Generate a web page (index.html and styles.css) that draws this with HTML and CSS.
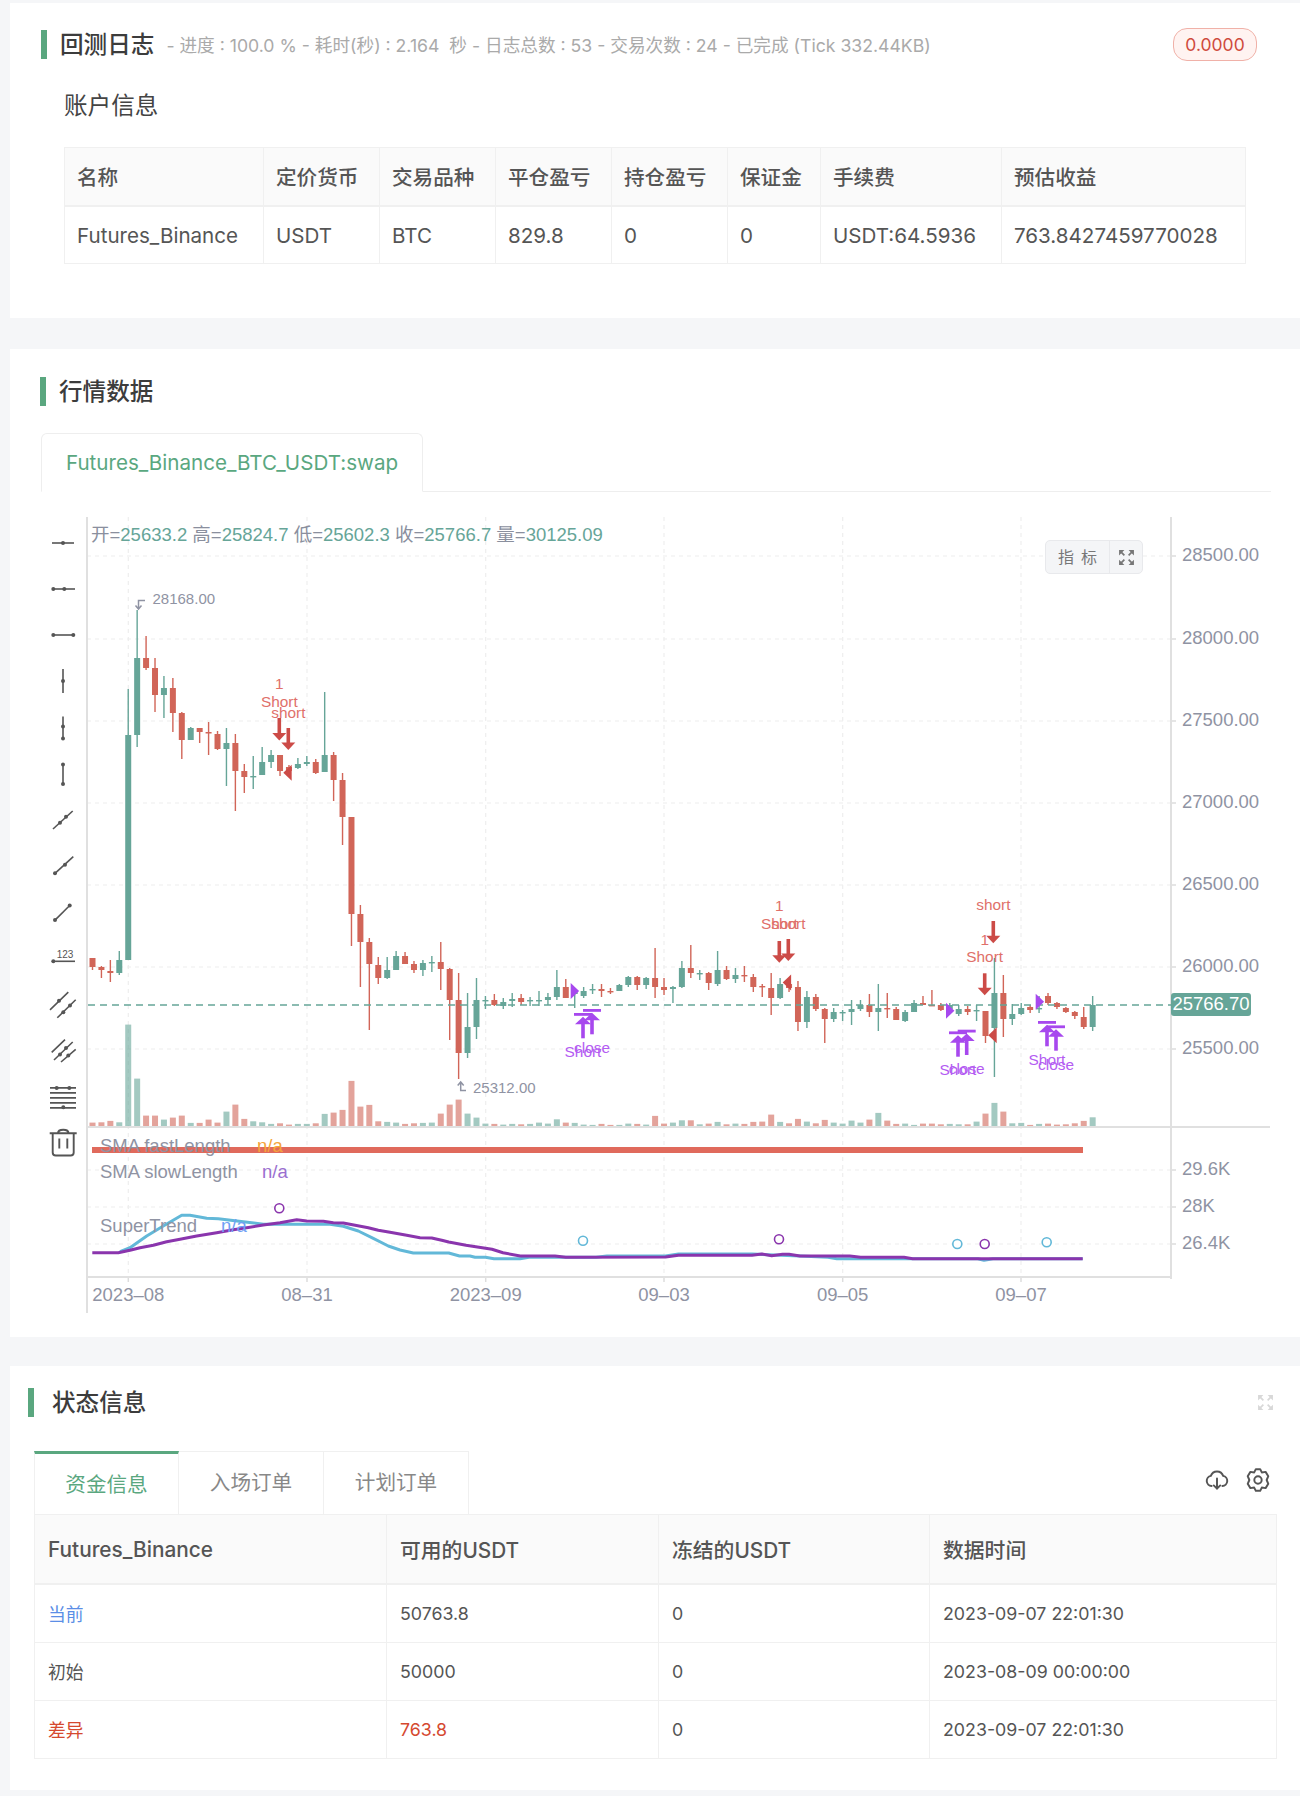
FILE: index.html
```html
<!DOCTYPE html>
<html lang="zh">
<head>
    <meta charset="UTF-8">
    <meta name="viewport" content="width=device-width, initial-scale=1.0">
    <title>回测日志</title>
    <link rel="stylesheet" href="styles.css">
</head>
<body>

    <section class="card log-card">
        <div class="card-head">
            <h2 class="card-title">回测日志</h2>
            <span class="progress">- 进度 : 100.0 % - 耗时(秒) : 2.164 &nbsp;秒 - 日志总数 : 53 - 交易次数 : 24 - 已完成 (Tick 332.44KB)</span>
            <span class="badge">0.0000</span>
        </div>
        <h3 class="sub-title">账户信息</h3>
        <table class="data-table account-table">
            <colgroup>
                <col width="199"><col width="116"><col width="116"><col width="116"><col width="116"><col width="93"><col width="181"><col width="244">
            </colgroup>
            <thead>
                <tr><th>名称</th><th>定价货币</th><th>交易品种</th><th>平仓盈亏</th><th>持仓盈亏</th><th>保证金</th><th>手续费</th><th>预估收益</th></tr>
            </thead>
            <tbody>
                <tr><td>Futures_Binance</td><td>USDT</td><td>BTC</td><td>829.8</td><td>0</td><td>0</td><td>USDT:64.5936</td><td>763.8427459770028</td></tr>
            </tbody>
        </table>
    </section>

    <section class="card market-card">
        <div class="card-head market-head">
            <h2 class="card-title">行情数据</h2>
        </div>
        <div class="symbol-tabs">
            <div class="symbol-tab">Futures_Binance_BTC_USDT:swap</div>
        </div>
        <div class="chart-wrap">
            <div class="toolbar">
                <svg class="tool" viewBox="0 0 28 28"><path d="M3 14H25"/><circle cx="14" cy="14" r="2"/></svg>
                <svg class="tool" viewBox="0 0 28 28"><path d="M3 14H26"/><circle cx="4.3" cy="14" r="2"/><circle cx="15.3" cy="14" r="2"/></svg>
                <svg class="tool" viewBox="0 0 28 28"><path d="M4 14H24"/><circle cx="4.3" cy="14" r="2"/><circle cx="24.3" cy="14" r="2"/></svg>
                <svg class="tool" viewBox="0 0 28 28"><path d="M14 2V26"/><circle cx="14" cy="14" r="2"/></svg>
                <svg class="tool" viewBox="0 0 28 28"><path d="M14 2.5V24"/><circle cx="14" cy="12.4" r="2"/><circle cx="14" cy="24.4" r="2"/></svg>
                <svg class="tool" viewBox="0 0 28 28"><path d="M14 4.5V24"/><circle cx="14" cy="4.5" r="2"/><circle cx="14" cy="23.9" r="2"/></svg>
                <svg class="tool" viewBox="0 0 28 28"><path d="M4 23L23.7 5"/><circle cx="11" cy="16.8" r="2"/><circle cx="17" cy="10.8" r="2"/></svg>
                <svg class="tool" viewBox="0 0 28 28"><path d="M6 21.3L24.3 4.7"/><circle cx="6" cy="21.3" r="2"/><circle cx="16" cy="12.7" r="2"/></svg>
                <svg class="tool" viewBox="0 0 28 28"><path d="M6 22.1L20.7 7.5"/><circle cx="6" cy="22.1" r="2"/><circle cx="20.7" cy="7.5" r="2"/></svg>
                <svg class="tool" viewBox="0 0 28 28"><path d="M4.3 17.3H26"/><circle cx="4.3" cy="17.3" r="2"/><text class="tool-num" x="16" y="14" text-anchor="middle">123</text></svg>
                <svg class="tool" viewBox="0 0 28 28"><path d="M1 19.8L19.3 2.2M8.3 27.8L26.7 9.8"/><circle cx="10" cy="10.8" r="2"/><circle cx="14.3" cy="22.2" r="2"/><circle cx="21" cy="15.5" r="2"/></svg>
                <svg class="tool" viewBox="0 0 28 28"><path d="M2.7 15.3L16 2.6M5 23L23.7 5M12 25L26.7 12.3"/><circle cx="17" cy="11" r="2"/><circle cx="11" cy="17.6" r="2"/><circle cx="19.3" cy="18.6" r="2"/></svg>
                <svg class="tool" viewBox="0 0 28 28"><path d="M1 4.9H27M1 9.9H27M1 14.9H27M1 19.9H27M1 24.9H27"/><circle cx="7.7" cy="4.9" r="2"/><circle cx="20.3" cy="4.9" r="2"/><circle cx="14.3" cy="24.2" r="2"/></svg>
                <svg class="tool trash" viewBox="0 0 28 28"><path d="M.7 4.2H27.7M9 4.2C9 -.5 19.5 -.5 19.5 4.2M3.7 5V23.5Q3.7 26.5 6.7 26.5H21.7Q24.7 26.5 24.7 23.5V5M10.3 9.5V19.5M18.3 9.5V19.5"/></svg>
            </div>
            <svg id="chart" class="chart" viewBox="87 516 1213 800" width="1213" height="800"></svg>
            <div class="indicator">
                <span class="indicator-text">指标</span>
                <span class="indicator-full">
                    <svg class="expand" viewBox="0 0 16 16"><path d="M1 1H6L1 6ZM15 1H10L15 6ZM1 15H6L1 10ZM15 15H10L15 10Z"/><path class="expand-tail" d="M3 3L6 6M13 3L10 6M3 13L6 10M13 13L10 10"/></svg>
                </span>
            </div>
        </div>
    </section>

    <section class="card status-card">
        <div class="card-head status-head">
            <h2 class="card-title">状态信息</h2>
            <svg class="expand expand-light" viewBox="0 0 16 16"><path d="M1 1H6L1 6ZM15 1H10L15 6ZM1 15H6L1 10ZM15 15H10L15 10Z"/><path class="expand-tail" d="M3 3L6 6M13 3L10 6M3 13L6 10M13 13L10 10"/></svg>
        </div>
        <div class="status-tabs">
            <div class="tab-list">
                <div class="tab active">资金信息</div>
                <div class="tab">入场订单</div>
                <div class="tab">计划订单</div>
            </div>
            <div class="tab-tools">
                <svg class="tab-icon cloud" viewBox="0 0 24 24"><path d="M7 17.5A4.7 4.7 0 0 1 6.3 8.2A6 6 0 0 1 17.7 8.2A4.7 4.7 0 0 1 17 17.5"/><path d="M12 10.5V20M9 17L12 20L15 17"/></svg>
                <svg class="tab-icon gear" viewBox="0 0 24 24"><path d="M10 2H14L15.5 5L19 4.5L21.5 8.5L20 12L21.5 15.5L19 19.5L15.5 19L14 22H10L8.5 19L5 19.5L2.5 15.5L4 12L2.5 8.5L5 4.5L8.5 5Z"/><circle cx="12" cy="12" r="3.4"/></svg>
            </div>
        </div>
        <table class="data-table status-table">
            <colgroup>
                <col width="352"><col width="272"><col width="271"><col width="347">
            </colgroup>
            <thead>
                <tr><th>Futures_Binance</th><th>可用的USDT</th><th>冻结的USDT</th><th>数据时间</th></tr>
            </thead>
            <tbody>
                <tr><td class="blue">当前</td><td>50763.8</td><td>0</td><td>2023-09-07 22:01:30</td></tr>
                <tr><td>初始</td><td>50000</td><td>0</td><td>2023-08-09 00:00:00</td></tr>
                <tr><td class="red">差异</td><td class="red">763.8</td><td>0</td><td>2023-09-07 22:01:30</td></tr>
            </tbody>
        </table>
    </section>

    <script src="chart.js"></script>
</body>
</html>
```

FILE: styles.css
```css
* {
    box-sizing: border-box;
}
body {
    margin: 0;
    background-color: #f5f6f8;
    font-family: Inter, "Noto Sans CJK SC", sans-serif;
    color: #555;
}
h2, h3 {
    margin: 0;
    font-weight: 500;
}

.card {
    margin-left: 10px;
    background-color: white;
}
.log-card {
    margin-top: 3px;
    height: 315px;
    padding: 25px 43px 0 31px;
}
.market-card {
    margin-top: 31px;
    height: 988px;
    padding-top: 28px;
}
.status-card {
    margin-top: 29px;
    height: 424px;
    padding-top: 22px;
}

.card-head {
    display: flex;
    align-items: center;
}
.market-head {
    margin-left: 30px;
}
.card-title {
    border-left: 6px solid #5aa77f;
    padding-left: 13px;
    height: 29px;
    line-height: 29px;
    font-size: 23.6px;
    color: #3c3c3c;
    white-space: nowrap;
}
.progress {
    margin-left: 12px;
    font-size: 17.65px;
    color: #aaa;
    white-space: nowrap;
}
.badge {
    margin-left: auto;
    height: 33px;
    width: 84px;
    line-height: 31px;
    text-align: center;
    font-size: 17.5px;
    color: #cf4a3c;
    background-color: #fff3f1;
    border: 1px solid #f0b1a8;
    border-radius: 14px;
}
.sub-title {
    margin: 30px 0 0 23px;
    font-size: 23.6px;
    line-height: 30px;
    font-weight: 400;
    color: #444;
}

.data-table {
    border-collapse: collapse;
    table-layout: fixed;
    color: #555;
}
.data-table th,
.data-table td {
    border: 1px solid #f0f0f0;
    text-align: left;
    white-space: nowrap;
}
.data-table th {
    background-color: #fafafa;
    border-bottom-width: 2px;
    font-weight: 500;
}
.account-table {
    margin: 26px 0 0 23px;
    width: 1181px;
}
.account-table th,
.account-table td {
    height: 58px;
    padding: 0 12px;
    font-size: 20.6px;
}
.account-table td {
    padding-top: 1px;
}
.status-table {
    margin-left: 24px;
    width: 1242px;
}
.status-table th {
    height: 69.5px;
    padding: 0 13px;
    font-size: 20.8px;
}
.status-table td {
    height: 58px;
    padding: 0 13px;
    font-size: 17.8px;
}
.blue {
    color: #5b8ee6;
}
.red {
    color: #d5492f;
}

.symbol-tabs {
    margin: 27px 29px 0 31px;
    height: 59px;
    border-bottom: 1px solid #eee;
}
.symbol-tab {
    width: 382px;
    height: 59px;
    line-height: 58px;
    text-align: center;
    font-size: 20.6px;
    color: #5aa77f;
    background-color: white;
    border: 1px solid #eee;
    border-bottom-color: white;
    border-radius: 6px 6px 0 0;
}

.chart-wrap {
    position: relative;
    display: flex;
    margin-top: 25px;
}
.toolbar {
    display: flex;
    flex-direction: column;
    gap: 18.15px;
    width: 77px;
    padding: 12px 0 0 39px;
}
.tool {
    flex: none;
    width: 28px;
    height: 28px;
    overflow: visible;
}
.tool path {
    fill: none;
    stroke: #555;
    stroke-width: 1.6;
}
.tool circle {
    fill: #555;
}
.tool-num {
    font-family: "Liberation Sans", sans-serif;
    font-size: 10px;
    fill: #555;
}
.trash path {
    stroke-width: 1.9;
}
.chart {
    flex: none;
    display: block;
    overflow: visible;
}
.indicator {
    position: absolute;
    top: 23px;
    right: 157px;
    display: flex;
    width: 98px;
    height: 34px;
    background-color: #f4f5f7;
    border: 1px solid #e8e9ec;
    border-radius: 5px;
}
.indicator-text {
    width: 63px;
    line-height: 32px;
    text-align: center;
    font-size: 16px;
    letter-spacing: 7px;
    padding-left: 7px;
    color: #777;
}
.indicator-full {
    flex: 1;
    display: flex;
    align-items: center;
    justify-content: center;
    border-left: 1px solid #e8e9ec;
}
.expand {
    width: 17px;
    height: 17px;
}
.expand path {
    fill: #777;
}
.expand .expand-tail {
    fill: none;
    stroke: #777;
    stroke-width: 1.6;
}
.expand-light path {
    fill: #d8d8d8;
}
.expand-light .expand-tail {
    stroke: #d8d8d8;
}

.chart text {
    font-family: "Liberation Sans", "Noto Sans CJK SC", sans-serif;
    font-size: 18.5px;
    dominant-baseline: central;
    transform: translateY(-2px);
}
.chart .axis-label {
    fill: #8f93a3;
}
.chart .price-tag {
    fill: white;
    text-anchor: middle;
}
.chart .ohlc-name {
    fill: #8a8f9e;
}
.chart .ohlc-value {
    fill: #66a598;
}
.chart .extreme {
    font-size: 15px;
    fill: #8f93a3;
}
.chart .mark-red,
.chart .mark-purple {
    font-size: 15.4px;
    text-anchor: middle;
}
.chart .mark-red {
    fill: #e0706a;
}
.chart .mark-purple {
    fill: #b45cf2;
}
.chart .na-orange {
    fill: #f5a53a;
}
.chart .na-purple {
    fill: #9a6fd0;
}
.chart .na-blue {
    fill: #6f9ff5;
}
.chart .grid {
    stroke: #eee;
    stroke-width: 1.2;
    stroke-dasharray: 4 4;
}
.chart .axis {
    stroke: #e0e0e0;
    stroke-width: 2;
}
.chart .tick {
    stroke: #ddd;
    stroke-width: 1.5;
}
.chart .last-line {
    stroke: #66a598;
    stroke-width: 1.4;
    stroke-dasharray: 7 5;
}
.chart .sma-line,
.chart .trend-line {
    fill: none;
    stroke-width: 3;
    stroke-linejoin: round;
}
.chart .sma-line {
    stroke: #62b8d8;
}
.chart .trend-line {
    stroke: #8a35ad;
}
.chart .dot-blue,
.chart .dot-purple {
    fill: white;
    stroke-width: 1.6;
}
.chart .dot-blue {
    stroke: #62b8d8;
}
.chart .dot-purple {
    stroke: #8a35ad;
}
.chart .hook {
    fill: none;
    stroke: #8f93a3;
    stroke-width: 1.5;
}

.status-head {
    margin-left: 18px;
    padding-right: 26px;
    justify-content: space-between;
}
.status-head .card-title {
    padding-left: 18px;
}
.status-tabs {
    display: flex;
    justify-content: space-between;
    align-items: flex-start;
    margin: 34px 29px 0 24px;
}
.tab-list {
    display: flex;
}
.tab {
    width: 145px;
    height: 63px;
    line-height: 62px;
    text-align: center;
    font-size: 20.6px;
    color: #888;
    border: 1px solid #f0f0f0;
    border-width: 1px 1px 0 0;
}
.tab:first-child {
    border-left-width: 1px;
}
.tab.active {
    color: #5aa77f;
    border-top: 3px solid #5aa77f;
}
.tab-tools {
    display: flex;
    gap: 15.5px;
    margin-top: 16px;
}
.tab-icon {
    width: 26px;
    height: 26px;
    fill: none;
    stroke: #555;
    stroke-width: 1.8;
    stroke-linecap: round;
    stroke-linejoin: round;
}
```

FILE: chart.js
```js
// candles: color, high, body top, body bottom, low, volume height (all in page pixels)
var candles = [
    ['r',957,957,966,969,4],['r',965,966,969,977,4.3],['r',959,970,972,981,5.7],['g',950,959,972,974,4.3],
    ['g',688,734,959,959,102],['g',609,657,734,746,48],['r',635,657,667,669,11],['r',657,667,694,711,11],
    ['g',675,687,694,717,7],['r',677,687,712,731,9],['r',711,712,739,758,11],['g',726,727,739,739,3.7],
    ['r',727,727,731,742,3.7],['r',721,731,732.5,754,7],['r',730,733,748,749,4],['g',727,742,748,785,15],
    ['r',733,742,770,810,22],['r',763,770,776,792,7.7],['g',755,775,776,788,5.3],['g',746,761,774,774,4.3],
    ['g',749,754,761,767,2.7],['r',754,754,770,775,3.3],['r',764,766,770,772,2],['g',757,763,767,768,2.7],
    ['g',755,761,763,765,2.7],['r',758,761,772,773,3.3],['g',691,754,771,771,12.7],['r',751,754,779,800,14],
    ['r',772,779,816,844,16.7],['r',816,816,913,945,45.7],['r',904,913,941,986,20],['r',937,941,963,1029,21.7],
    ['r',956,964,977,983,5.3],['g',956,969,977,978,4.7],['g',950,955,969,969,4],['r',951,955,963,963,2.7],
    ['r',960,963,969,972,3.3],['g',959,962,969,975,3.7],['g',955,961,962,971,4],['r',941,961,968,989,13],
    ['r',967,968,999,1039,22],['r',972,999,1052,1078,27],['g',992,1026,1052,1057,13],['g',977,999,1026,1038,9],
    ['g',995,999,1000,1008,3],['r',993,999,1004,1005,2.7],['g',997,1001,1005,1008,2],['g',992,998,1000,1006,2.7],
    ['r',993,997,1001,1004,2.3],['g',996,999,1000,1005,2.7],['g',990,999,1000,1005,4],['g',992,996,999,1004,3],
    ['g',969,986,996,999,7.3],['r',978,986,997,997,4],['g',987,990,993,1007,3.7],['g',986,990,995,997,2],
    ['g',983,988,989,993,1.7],['r',983,988,990,996,2.7],['r',987,990,991,993,1.7],['g',983,984,990,990,1.7],
    ['g',975,976,984,986,3],['r',975,976,984,989,2.7],['g',976,977,984,988,2],['r',947,977,986,997,10.7],
    ['r',977,986,989,994,3],['g',985,986,988,1002,4],['g',960,967,986,987,6.3],['r',944,967,972,977,6.3],
    ['g',969,972,973,979,2.3],['r',971,972,982,989,3],['g',950,969,983,985,4.7],['r',965,969,978,979,2.3],
    ['g',967,974,978,982,3],['r',965,974,975,981,2.7],['r',973,976,986,991,4.7],['r',983,985,986,996,5],
    ['r',972,987,997,1014,12],['g',977,983,997,998,4.7],['r',980,983,987,991,3.3],['r',980,986,1021,1030,7.7],
    ['g',990,996,1021,1027,5],['r',993,996,1008,1010,3.3],['r',1007,1008,1018,1042,6.7],['g',1007,1011,1018,1021,4],
    ['g',1009,1011,1012,1020,3],['g',999,1008,1011,1024,6],['g',999,1004,1008,1010,4],['r',993,1004,1011,1016,7],
    ['g',983,1007,1011,1030,13.7],['r',992,1007,1008,1017,6],['r',1006,1008,1019,1019,2.7],['g',1009,1011,1020,1021,3],
    ['g',999,1002,1011,1011,1.7],['r',995,1002,1004,1004,3],['r',989,1004,1005,1005,3],['r',1002,1004,1009,1010,2.3],
    ['g',1002,1004,1008,1010,2.7],['g',1004,1008,1013,1015,2.3],['r',1005,1008,1011,1014,2.3],['g',1004,1009,1010,1020,5],
    ['r',1010,1010,1035,1042,13],['g',957,992,1027,1076,23.7],['r',974,992,1018,1036,15],['g',1003,1013,1018,1024,3.3],
    ['g',1002,1007,1013,1014,3.7],['r',1004,1006,1009,1012,1.7],['g',995,1007,1008,1012,2.7],['r',992,995,1002,1004,3],
    ['r',1001,1002,1006,1008,2],['r',1006,1007,1011,1012,2.3],['r',1010,1011,1015,1018,3.3],['r',1006,1016,1026,1028,5.7],
    ['g',995,1004,1026,1030,9.3]
];

var colors = { g: '#66a598', r: '#d16558' };
var gridX = [128.3, 307, 485.7, 664, 842.7, 1021];
var gridY = [555, 638, 720, 802, 884, 966, 1048, 1169, 1206, 1243];
var priceLabels = [[555, '28500.00'], [638, '28000.00'], [720, '27500.00'], [802, '27000.00'], [884, '26500.00'], [966, '26000.00'], [1048, '25500.00'], [1169, '29.6K'], [1206, '28K'], [1243, '26.4K']];
var timeLabels = ['2023–08', '08–31', '2023–09', '09–03', '09–05', '09–07'];

var smaLine = '120,1250.7 130,1246.7 146.7,1235 163.3,1225 181.7,1214.3 190,1214.3 206.7,1217.3 218.3,1217.7 243.3,1220.7 263.3,1223.3 330,1223.3 343.3,1225.3 358.3,1230 373.3,1237.3 388.3,1245 400,1249 413.3,1252 448.7,1252 459.5,1255 470,1255 475,1256.3 485.5,1256.3 494,1257.7 520,1257.7 529,1256.3 596,1256.3 607,1255 665.5,1255 678.5,1253 752,1253 800,1255 828,1256.3 836.8,1257.7 977.7,1257.7 984,1259.3 993,1257.7 1082.7,1257.7';
var trendLine = '92.3,1251.7 118.3,1251.7 130,1249.3 140,1246.7 153.3,1244.3 166.7,1240.7 180,1238.3 196.7,1235 216.7,1231.7 233.3,1228.7 246.7,1226.7 263.3,1224 280,1221.7 296.7,1218.7 306.7,1220 323.3,1220.3 333.3,1221.7 343.3,1222 368.3,1226.7 378.3,1229.3 390,1231.3 406.7,1234.3 420,1236.7 431.7,1237 441.7,1239.3 448.7,1241 466,1244.3 492,1248.3 503,1251.7 520.2,1255 555,1255 565.8,1256.3 665.5,1256 678.5,1254.3 752,1254.3 761.8,1253 771.7,1254.7 782.6,1253.3 789,1253.3 800,1255 849.8,1255 860.6,1256.3 904,1256.3 912.7,1257.7 1082.7,1257.7';

function rect(x, y, w, h, fill, opacity) {
    return '<rect x="' + x + '" y="' + y + '" width="' + w + '" height="' + h + '" fill="' + fill + '"' + (opacity ? ' opacity="' + opacity + '"' : '') + '/>';
}
function line(cls, x1, y1, x2, y2) {
    return '<line class="' + cls + '" x1="' + x1 + '" y1="' + y1 + '" x2="' + x2 + '" y2="' + y2 + '"/>';
}
function text(cls, x, y, str) {
    return '<text class="' + cls + '" x="' + x + '" y="' + y + '">' + str + '</text>';
}
function tri(pts, fill) {
    return '<polygon points="' + pts + '" fill="' + fill + '"/>';
}

var out = '';

// grid and axes
gridY.forEach(function (y) { out += line('grid', 87, y, 1171, y); });
gridX.forEach(function (x) {
    out += line('grid', x, 516, x, 1276);
    out += line('tick', x, 1276, x, 1281);
});
priceLabels.forEach(function (p) {
    out += line('tick', 1171, p[0], 1176, p[0]);
    out += text('axis-label', 1182, p[0], p[1]);
});
timeLabels.forEach(function (t, i) {
    out += '<text class="axis-label" text-anchor="middle" x="' + gridX[i] + '" y="1295">' + t + '</text>';
});

// volume and candles
candles.forEach(function (c, i) {
    var x = 92.5 + 8.93 * i;
    out += rect(x - 3, 1125.6 - c[5], 6, c[5], colors[c[0]], 0.6);
    out += rect(x - 0.7, c[1], 1.4, c[4] - c[1], colors[c[0]]);
    out += rect(x - 3, c[2], 6, Math.max(c[3] - c[2], 1.4), colors[c[0]]);
});

out += line('axis', 87, 516, 87, 1312);
out += line('axis', 1171, 516, 1171, 1278);
out += line('axis', 87, 1126, 1270, 1126);
out += line('axis', 87, 1276, 1171, 1276);
out += line('last-line', 88, 1004, 1171, 1004);

// last price tag
out += '<rect x="1171" y="992" width="80" height="23" rx="3" fill="#66a598"/>';
out += text('price-tag', 1211, 1004, '25766.70');

// ohlc line
var ohlc = [['开=', '25633.2 '], ['高=', '25824.7 '], ['低=', '25602.3 '], ['收=', '25766.7 '], ['量=', '30125.09']];
out += '<text x="91" y="535" xml:space="preserve">' + ohlc.map(function (o) {
    return '<tspan class="ohlc-name">' + o[0] + '</tspan><tspan class="ohlc-value">' + o[1] + '</tspan>';
}).join('') + '</text>';

// highest and lowest marks
out += '<path class="hook" d="M145 599.5H138.5V607M135.5 604.5L138.5 608L141.5 604.5"/>';
out += text('extreme', 152.5, 599, '28168.00');
out += '<path class="hook" d="M466 1089.5H460.7V1082M457.7 1084.5L460.7 1081L463.7 1084.5"/>';
out += text('extreme', 473, 1088, '25312.00');

// trade arrows
function downArrow(x, top, tip) {
    return rect(x - 1.8, top, 3.6, tip - top - 6, '#cc4b47') + tri((x - 7) + ',' + (tip - 7.5) + ' ' + (x + 7) + ',' + (tip - 7.5) + ' ' + x + ',' + tip, '#cc4b47');
}
function upArrow(x, bar) {
    return rect(x - 9, bar - 1.3, 18, 2.8, '#a748ee') + tri((x - 8) + ',' + (bar + 10) + ' ' + (x + 8) + ',' + (bar + 10) + ' ' + x + ',' + (bar + 2.5), '#a748ee') + rect(x - 1.8, bar + 8, 3.6, 16, '#a748ee');
}
function leftTri(x, y) {
    return tri(x + ',' + y + ' ' + (x + 8.4) + ',' + (y - 8) + ' ' + (x + 8.4) + ',' + (y + 8), '#cc4b47');
}
function rightTri(x, y) {
    return tri(x + ',' + (y - 8) + ' ' + (x + 8.4) + ',' + y + ' ' + x + ',' + (y + 8), '#a748ee');
}

out += downArrow(279.3, 717, 739.5) + downArrow(288.3, 727, 749) + downArrow(779.3, 940, 961.7);
out += downArrow(788.3, 938, 960) + downArrow(993.3, 920, 942.3) + downArrow(984.7, 972.3, 994.3);
out += leftTri(283.3, 771.7) + leftTri(782.7, 981.5) + leftTri(988.3, 1034.3);
out += rightTri(570.7, 990) + rightTri(946, 1009.7) + rightTri(1035.7, 1000.7);
out += upArrow(583, 1013.3) + upArrow(592, 1009.3) + upArrow(958, 1031.7);
out += upArrow(966.7, 1030) + upArrow(1047, 1021.3) + upArrow(1056, 1025.7);

out += text('mark-red', 279.3, 684, '1') + text('mark-red', 279.3, 702, 'Short') + text('mark-red', 288.3, 713, 'short');
out += text('mark-red', 779.3, 906.7, '1') + text('mark-red', 779.3, 924, 'Short') + text('mark-red', 788.3, 924, 'short');
out += text('mark-red', 993.3, 905.7, 'short') + text('mark-red', 984.7, 940, '1') + text('mark-red', 984.7, 957.7, 'Short');
out += text('mark-purple', 583, 1052.7, 'Short') + text('mark-purple', 592, 1048.7, 'close');
out += text('mark-purple', 958, 1070.7, 'Short') + text('mark-purple', 966.7, 1069.3, 'close');
out += text('mark-purple', 1047, 1060.3, 'Short') + text('mark-purple', 1056, 1065, 'close');

// indicator panel
out += rect(92, 1146, 991, 6, '#e06a5c');
out += '<polyline class="sma-line" points="' + smaLine + '"/>';
out += '<polyline class="trend-line" points="' + trendLine + '"/>';
[[583, 1239.7, 'dot-blue'], [279.3, 1207.3, 'dot-purple'], [779, 1238.3, 'dot-purple'], [957.3, 1243, 'dot-blue'], [984.7, 1243, 'dot-purple'], [1046.7, 1241.3, 'dot-blue']].forEach(function (d) {
    out += '<circle class="' + d[2] + '" cx="' + d[0] + '" cy="' + d[1] + '" r="4.5"/>';
});
out += text('axis-label', 100, 1146, 'SMA fastLength') + text('na-orange', 257, 1146, 'n/a');
out += text('axis-label', 100, 1172, 'SMA slowLength') + text('na-purple', 262, 1172, 'n/a');
out += text('axis-label', 100, 1226, 'SuperTrend') + text('na-blue', 221, 1226, 'n/a');

document.getElementById('chart').innerHTML = out;
```
